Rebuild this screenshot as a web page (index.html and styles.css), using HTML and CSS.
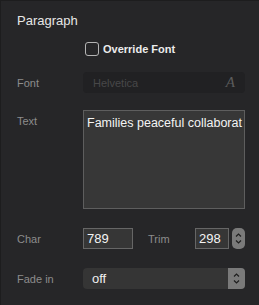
FILE: index.html
```html
<!DOCTYPE html>
<html lang="en">
<head>
    <meta charset="UTF-8">
    <title>Paragraph</title>
    <link rel="stylesheet" href="styles.css">
</head>
<body>
    <div class="panel">
        <div class="title">Paragraph</div>

        <div class="row check-row">
            <label class="check"><span class="box"></span>Override Font</label>
        </div>

        <div class="row font-row">
            <span class="label">Font</span>
            <div class="font-field">
                <span class="placeholder">Helvetica</span>
                <span class="font-icon">A</span>
            </div>
        </div>

        <div class="row text-row">
            <span class="label">Text</span>
            <div class="textarea">Families peaceful collaborat</div>
        </div>

        <div class="row char-row">
            <span class="label">Char</span>
            <div class="num wide">789</div>
            <span class="label trim">Trim</span>
            <div class="num narrow">298</div>
            <div class="stepper small">
                <svg width="7" height="13" viewBox="0 0 7 13"><path d="M1 4.5 L3.5 2 L6 4.5 M1 8.5 L3.5 11 L6 8.5" fill="none" stroke="#1e1e1e" stroke-width="1.2"/></svg>
            </div>
        </div>

        <div class="row fade-row">
            <span class="label">Fade in</span>
            <div class="select">
                <span class="value">off</span>
                <div class="stepper">
                    <svg width="7" height="13" viewBox="0 0 7 13"><path d="M1 4.5 L3.5 2 L6 4.5 M1 8.5 L3.5 11 L6 8.5" fill="none" stroke="#1e1e1e" stroke-width="1.2"/></svg>
                </div>
            </div>
        </div>
    </div>
</body>
</html>
```

FILE: styles.css
```css
body {
    margin: 0;
    background: #262628;
    font-family: 'Liberation Sans', Arial, sans-serif;
}
.panel {
    width: 259px;
    height: 305px;
    box-sizing: border-box;
    border-top: 1px solid #1d1d1e;
    border-left: 1px solid #1d1d1e;
    padding: 12px 14px 0 16px;
    background: #262628;
}
.title {
    color: #e6e6e6;
    font-size: 13px;
    line-height: 16px;
}
.row {
    display: flex;
    align-items: center;
}
.label {
    width: 66px;
    flex-shrink: 0;
    color: #8c8c8c;
    font-size: 11px;
}
.check-row {
    margin-top: 13px;
    padding-left: 68px;
    height: 14px;
}
.check {
    display: flex;
    align-items: center;
    color: #ececec;
    font-size: 11px;
    font-weight: bold;
}
.box {
    width: 12px;
    height: 12px;
    border: 1px solid #b4b4b4;
    border-radius: 3px;
    margin-right: 4px;
}
.font-row {
    margin-top: 16px;
    height: 21px;
}
.font-field {
    flex: 1;
    height: 21px;
    background: #212123;
    border-radius: 4px;
    display: flex;
    align-items: center;
    justify-content: space-between;
    padding: 0 10px 0 10px;
}
.placeholder {
    color: #484849;
    font-size: 11px;
}
.font-icon {
    color: #5c5c5c;
    font-family: 'Liberation Serif', serif;
    font-style: italic;
    font-size: 15px;
}
.text-row {
    margin-top: 17px;
    align-items: flex-start;
}
.text-row .label {
    padding-top: 5px;
}
.textarea {
    flex: 1;
    height: 99px;
    box-sizing: border-box;
    border: 1px solid #5e5e5e;
    background: #373737;
    color: #f4f4f4;
    font-size: 12.5px;
    line-height: 16px;
    padding: 4px 0 0 3px;
    white-space: nowrap;
    overflow: hidden;
}
.char-row {
    margin-top: 19px;
    height: 21px;
}
.num {
    height: 21px;
    box-sizing: border-box;
    border: 1px solid #666;
    background: #363636;
    color: #f4f4f4;
    font-size: 13px;
    line-height: 19px;
    padding-left: 3px;
}
.num.wide {
    width: 50px;
}
.label.trim {
    width: 47px;
    margin-left: 15px;
}
.num.narrow {
    width: 34px;
}
.stepper {
    display: flex;
    align-items: center;
    justify-content: center;
    background: #7a7a7a;
}
.stepper.small {
    width: 13px;
    height: 21px;
    margin-left: 3px;
    border-radius: 5px;
}
.fade-row {
    margin-top: 19px;
    height: 21px;
}
.select {
    flex: 1;
    height: 21px;
    background: #353535;
    border-radius: 4px;
    display: flex;
    align-items: center;
    justify-content: space-between;
    overflow: hidden;
}
.value {
    color: #f0f0f0;
    font-size: 13px;
    padding-left: 9px;
}
.select .stepper {
    width: 17px;
    height: 21px;
}
```
